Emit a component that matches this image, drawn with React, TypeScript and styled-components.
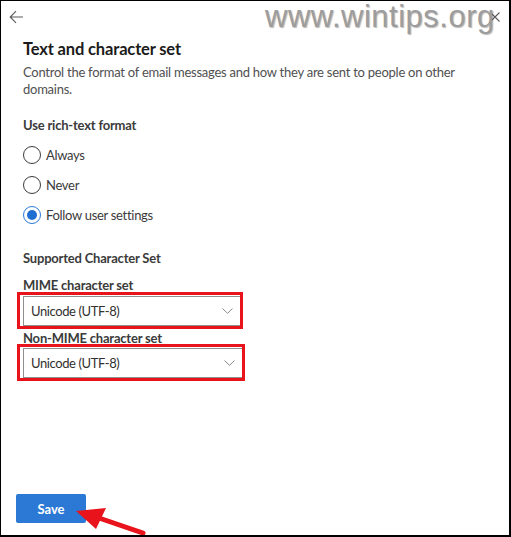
import React from "react";
import styled, { createGlobalStyle } from "styled-components";

const Global = createGlobalStyle`
  html, body { margin: 0; padding: 0; background: #ffffff; }
  body { font-family: Lato, "Noto Sans", Arial, sans-serif; }
  * { box-sizing: border-box; }
`;

const Panel = styled.div`
  position: relative;
  width: 511px;
  height: 537px;
  background: #ffffff;
  border-style: solid;
  border-color: #000000;
  border-width: 1px 2px 2px 1px;
  display: flex;
  flex-direction: column;
  overflow: hidden;
`;

const TopBar = styled.div`
  height: 31px;
  display: flex;
  align-items: center;
  justify-content: space-between;
  padding: 0 9px 0 8px;
`;

const IconButton = styled.span`
  display: inline-flex;
  align-items: center;
  justify-content: center;
  line-height: 0;
`;

const Watermark = styled.div`
  position: absolute;
  top: -2px;
  left: 264px;
  font-family: "Liberation Sans", Arial, sans-serif;
  font-size: 31px;
  line-height: 36px;
  color: #9d9d9d;
  letter-spacing: 0.5px;
  text-shadow: 1px 1px 1px rgba(0, 0, 0, 0.28), -1px -1px 0 rgba(255, 255, 255, 0.9);
  pointer-events: none;
  white-space: nowrap;
`;

const Content = styled.div`
  display: flex;
  flex-direction: column;
  padding: 0 20px 0 22px;
`;

const Title = styled.h1`
  margin: 5px 0 0;
  font-size: 16.5px;
  line-height: 24px;
  font-weight: 700;
  letter-spacing: -0.15px;
  color: #1b1b1b;
`;

const Description = styled.p`
  margin: 3px 0 0;
  font-size: 13px;
  line-height: 17px;
  letter-spacing: -0.25px;
  color: #505050;
  max-width: 450px;
`;

const SectionLabel = styled.div<{ $top: number }>`
  margin-top: ${(p) => p.$top}px;
  font-size: 13px;
  line-height: 18px;
  font-weight: 700;
  letter-spacing: -0.2px;
  color: #3b3b3b;
`;

const RadioGroup = styled.div`
  display: flex;
  flex-direction: column;
  margin-top: 6px;
`;

const RadioRow = styled.label`
  height: 30px;
  display: flex;
  align-items: center;
  gap: 5px;
  font-size: 13px;
  letter-spacing: -0.3px;
  color: #3b3b3b;
`;

const RadioCircle = styled.span<{ $checked?: boolean }>`
  width: 18px;
  height: 18px;
  border-radius: 50%;
  border: 1px solid ${(p) => (p.$checked ? "#2a7ad6" : "#3b3b3b")};
  display: inline-flex;
  align-items: center;
  justify-content: center;
  flex-shrink: 0;
  &::after {
    content: "";
    display: ${(p) => (p.$checked ? "block" : "none")};
    width: 10px;
    height: 10px;
    border-radius: 50%;
    background: #1f6fd1;
  }
`;

const FieldLabel = styled.div<{ $top: number }>`
  margin-top: ${(p) => p.$top}px;
  font-size: 13px;
  line-height: 16px;
  font-weight: 700;
  letter-spacing: -0.2px;
  color: #3b3b3b;
`;

const Highlight = styled.div<{ $width: number; $top: number }>`
  width: ${(p) => p.$width}px;
  margin: ${(p) => p.$top}px 0 0 -6px;
  border: 3px solid #e8131b;
  padding: 1px 0 0 3px;
  overflow: hidden;
`;

const Dropdown = styled.div`
  width: calc(100% + 4px);
  height: 30px;
  border: 1px solid #8f8f8f;
  display: flex;
  align-items: center;
  justify-content: space-between;
  padding: 0 10px 0 7px;
  font-size: 13px;
  letter-spacing: -0.4px;
  color: #323130;
  background: #ffffff;
`;

const Spacer = styled.div`
  flex: 1;
`;

const Footer = styled.div`
  padding: 0 0 12px 15px;
  display: flex;
`;

const PrimaryButton = styled.button`
  width: 70px;
  height: 29px;
  border: none;
  border-radius: 2px;
  background: #2b79d5;
  color: #ffffff;
  font-family: Lato, "Noto Sans", Arial, sans-serif;
  font-size: 13px;
  font-weight: 700;
  padding: 0;
`;

const ArrowOverlay = styled.svg`
  position: absolute;
  left: 0;
  top: 0;
  pointer-events: none;
`;

const Chevron = () => (
  <svg width="11" height="6" viewBox="0 0 11 6">
    <path d="M0.5 0.5 L5.5 5.3 L10.5 0.5" fill="none" stroke="#8a8a8a" strokeWidth="1" />
  </svg>
);

const options = [
  { label: "Always", checked: false },
  { label: "Never", checked: false },
  { label: "Follow user settings", checked: true },
];

export default function App() {
  return (
    <>
      <Global />
      <Panel>
        <TopBar>
          <IconButton>
            <svg width="15" height="14" viewBox="0 0 15 14">
              <path d="M14 7 H1.5 M7 1.2 L1.2 7 L7 12.8" fill="none" stroke="#5a5a5a" strokeWidth="1.1" />
            </svg>
          </IconButton>
          <IconButton>
            <svg width="10" height="10" viewBox="0 0 10 10">
              <path d="M0.5 0.5 L9.5 9.5 M9.5 0.5 L0.5 9.5" fill="none" stroke="#5a5a5a" strokeWidth="1.1" />
            </svg>
          </IconButton>
        </TopBar>
        <Watermark>www.wintips.org</Watermark>
        <Content>
          <Title>Text and character set</Title>
          <Description>
            Control the format of email messages and how they are sent to people on other domains.
          </Description>
          <SectionLabel $top={18}>Use rich-text format</SectionLabel>
          <RadioGroup>
            {options.map((o) => (
              <RadioRow key={o.label}>
                <RadioCircle $checked={o.checked} />
                {o.label}
              </RadioRow>
            ))}
          </RadioGroup>
          <SectionLabel $top={19}>Supported Character Set</SectionLabel>
          <FieldLabel $top={10}>MIME character set</FieldLabel>
          <Highlight $width={226} $top={-1}>
            <Dropdown>
              <span>Unicode (UTF-8)</span>
              <Chevron />
            </Dropdown>
          </Highlight>
          <FieldLabel $top={1}>Non-MIME character set</FieldLabel>
          <Highlight $width={228} $top={-2}>
            <Dropdown>
              <span>Unicode (UTF-8)</span>
              <Chevron />
            </Dropdown>
          </Highlight>
        </Content>
        <Spacer />
        <Footer>
          <PrimaryButton>Save</PrimaryButton>
        </Footer>
        <ArrowOverlay width="511" height="537" viewBox="0 0 511 537">
          <polygon points="75,510 105,507 95,528" fill="#e8131b" />
          <line x1="98" y1="517" x2="142" y2="532" stroke="#e8131b" strokeWidth="5" strokeLinecap="round" />
        </ArrowOverlay>
      </Panel>
    </>
  );
}
